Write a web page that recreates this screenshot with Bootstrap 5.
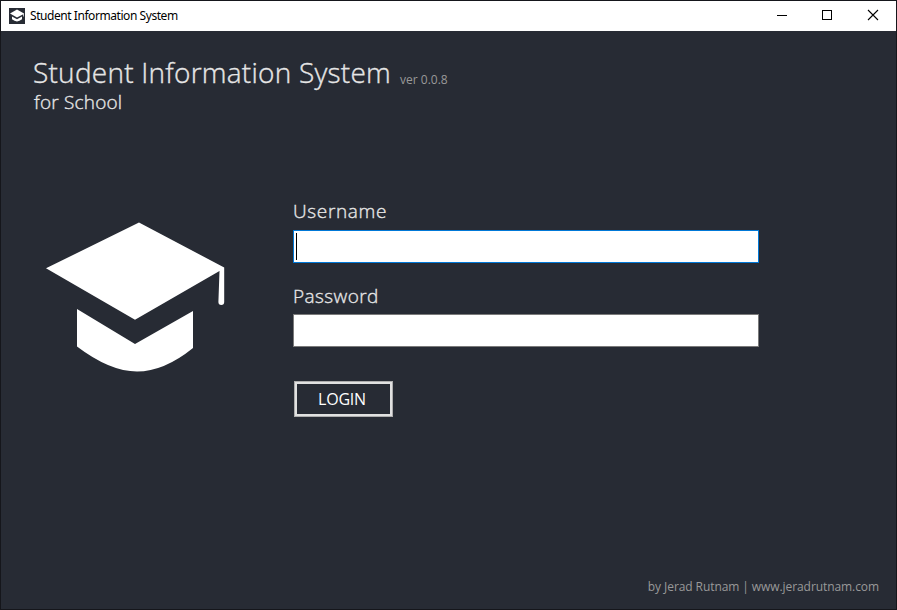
<!DOCTYPE html>
<html lang="en">
<head>
<meta charset="utf-8">
<meta name="viewport" content="width=device-width, initial-scale=1">
<title>Student Information System</title>
<link href="https://cdn.jsdelivr.net/npm/bootstrap@5.3.0/dist/css/bootstrap.min.css" rel="stylesheet">
<style>
  body { font-family: "Open Sans", sans-serif; color: #e6e6e6; background: #272b34; }
  .app-window { border: 1px solid #15161b; height: 610px; }
  .title-bar { height: 30px; background: #fff; color: #000; font: 12px/30px "Noto Sans", sans-serif; padding-left: 8px; }
  .title-text { letter-spacing: -.44px; margin-left: 5px; }
  .win-btn { width: 46px; height: 30px; }
  .app-header { padding: 21px 0 0 32px; height: 158px; }
  .app-title, .app-subtitle, .field-label { font-weight: 300; -webkit-text-stroke: .35px currentColor; }
  .app-title { font-size: 28px; line-height: 40px; letter-spacing: .24px; }
  .app-version { font-size: 12px; line-height: 18px; color: #999; margin: 19px 0 0 9px; }
  .app-subtitle { font-size: 19px; line-height: 20px; margin-left: 1px; letter-spacing: .2px; }
  .logo-col { width: 292px; padding: 32px 0 0 44px; }
  .login-form { width: 466px; padding-top: 10px; }
  .field-label { font-size: 19px; line-height: 24px; height: 24px; letter-spacing: .65px; }
  .field-label.field-gap { letter-spacing: .42px; }
  .field-box { height: 33px; border: 1px solid #7a7a7a; border-radius: 0; background: #fff; padding: 2px; margin-top: 7px; }
  .field-box.active { border-color: #0078d7; }
  .field-gap { margin-top: 21px; }
  .field-gap + .field-box { margin-top: 6px; }
  .caret { width: 1px; height: 27px; background: #000; }
  .btn-login { width: 99px; height: 36px; margin: 34px 0 0 1px; border: 1px solid #adadad; border-radius: 0; box-shadow: inset 0 0 0 2px #e1e1e1; color: #fff; font-size: 16px; line-height: 34px; padding: 0 3px 0 0; letter-spacing: -.2px; }
  .app-footer { font-size: 12px; line-height: 16px; color: #999; padding: 0 17px 14px 0; letter-spacing: -.08px; }
</style>
<script src="https://cdn.jsdelivr.net/npm/bootstrap@5.3.0/dist/js/bootstrap.bundle.min.js"></script>
</head>
<body class="overflow-hidden">
<div class="app-window d-flex flex-column">
  <div class="title-bar d-flex align-items-center flex-shrink-0">
    <svg width="16" height="16" viewBox="0 0 16 16"><path fill="#272b34" d="M0 0h16v16H0z"/><path fill="#fff" d="M1 5.500l7-4 7 4v3h-.7V6.200L8 9.500zM3 8.500L8 11.300 13 8.500v2.800Q8 15.500 3 11.300z"/></svg>
    <span class="title-text">Student Information System</span>
    <div class="d-flex ms-auto">
      <svg class="win-btn" viewBox="0 0 46 30"><path d="M19 14.500h10" stroke="#000" shape-rendering="crispEdges"/></svg>
      <svg class="win-btn" viewBox="0 0 46 30"><path d="M18.500 9.500h9v9h-9z" fill="none" stroke="#000" shape-rendering="crispEdges"/></svg>
      <svg class="win-btn" viewBox="0 0 46 30"><path d="M18 9l10 10m0-10l-10 10" fill="none" stroke="#000" stroke-width="1.100"/></svg>
    </div>
  </div>
  <header class="app-header flex-shrink-0">
    <div class="d-flex align-items-start">
      <h1 class="app-title m-0">Student Information System</h1>
      <span class="app-version">ver 0.0.8</span>
    </div>
    <div class="app-subtitle">for School</div>
  </header>
  <main class="d-flex flex-grow-1">
    <div class="logo-col">
      <svg class="d-block" width="182" height="153" viewBox="45 221 182 153" fill="#fff"><path d="M46 268.300L139 222.500 224.200 267.500V302a2.700 2.700 0 0 1-5.800 0L219.500 271 135 319.700z"/><path d="M77 309l58 35 58-33v37q-29 23.500-56 23.500T77 346.500z"/></svg>
    </div>
    <form class="login-form">
      <div class="field-label">Username</div>
      <div class="field-box active"><div class="caret"></div></div>
      <div class="field-label field-gap">Password</div>
      <div class="field-box"></div>
      <button type="button" class="btn btn-login d-block">LOGIN</button>
    </form>
  </main>
  <footer class="app-footer text-end">by Jerad Rutnam | www.jeradrutnam.com</footer>
</div>
</body>
</html>
